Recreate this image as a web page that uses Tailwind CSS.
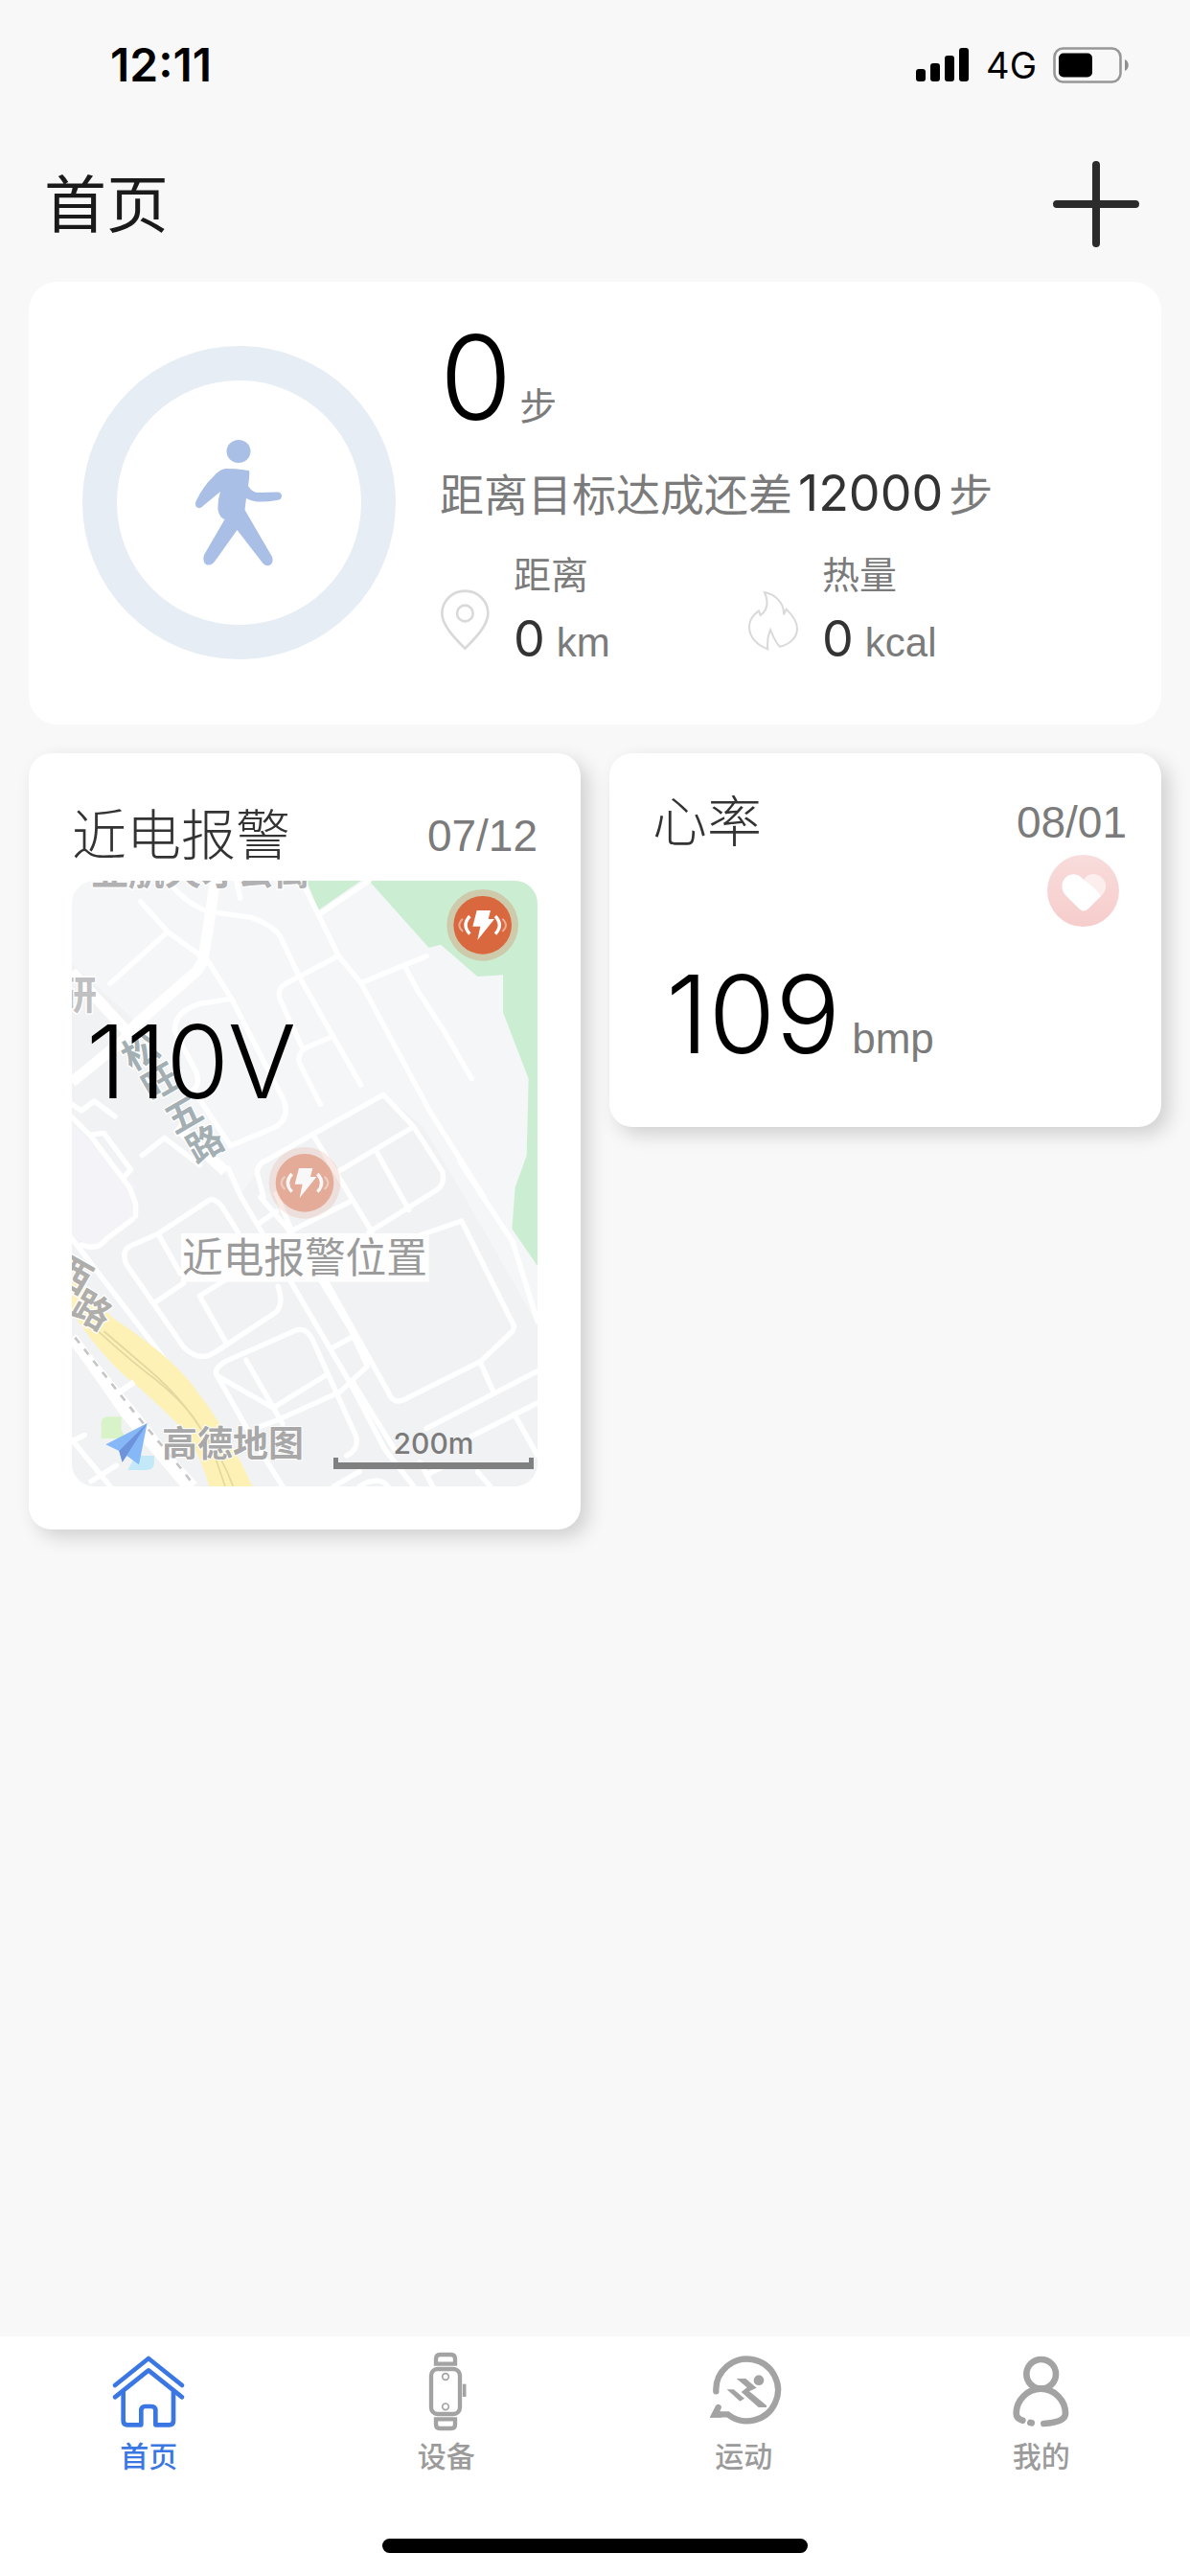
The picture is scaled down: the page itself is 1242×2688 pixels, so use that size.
<!DOCTYPE html>
<html lang="zh-CN">
<head>
  <meta charset="UTF-8">
  <meta name="viewport" content="width=device-width, initial-scale=1.0">
  <title>首页</title>
  <script src="https://cdn.jsdelivr.net/npm/@tailwindcss/browser@4"></script>
</head>
<body class="min-h-screen flex flex-col bg-[#f8f8f8] text-black font-[Inter,'Noto_Sans_CJK_SC',sans-serif]">

  <!-- Status bar -->
  <div class="h-[136px] pl-[115px] pr-[63px] flex items-center justify-between">
    <span class="text-[48px] leading-none font-semibold">12:11</span>
    <div class="flex items-center gap-[17px]">
      <svg class="w-[56px] h-[36px]" viewBox="0 0 56 36">
        <rect x="0" y="22" width="10" height="13" rx="3"/>
        <rect x="15" y="16" width="10" height="19" rx="3"/>
        <rect x="30" y="8" width="10" height="27" rx="3"/>
        <rect x="45" y="0" width="10" height="35" rx="3"/>
      </svg>
      <span class="text-[38px] leading-none">4G</span>
      <svg class="w-[80px] h-[38px]" viewBox="0 0 80 38">
        <rect x="1.5" y="1.5" width="69" height="35" rx="9" fill="none" stroke="#979797" stroke-width="2.6"/>
        <rect x="6" y="6.500" width="35" height="25" rx="5"/>
        <path d="M75 13c5 2 5 10 0 12z" fill="#8f8f8f"/>
      </svg>
    </div>
  </div>

  <!-- Header -->
  <header class="h-[154px] mb-1 pl-[46px] pr-[53px] flex items-center justify-between">
    <h1 class="text-[65px] leading-none font-normal text-[#1a1a1a]">首页</h1>
    <button type="button" aria-label="添加" class="w-[90px] h-[90px]">
      <svg class="w-full h-full" viewBox="0 0 90 90" stroke="#2b2b2b" stroke-width="8" stroke-linecap="round">
        <path d="M45 4v82M4 45h82"/>
      </svg>
    </button>
  </header>

  <main class="grow px-[30px]">

    <!-- Steps -->
    <section class="bg-white rounded-[30px] pl-14 pt-[39px] pb-[59px] flex items-start gap-[46px]">
      <svg class="w-[327px] h-[327px] mt-7 shrink-0" viewBox="86 361 327 327">
        <circle cx="249.500" cy="524.500" r="145.500" fill="none" stroke="#e7edf4" stroke-width="36"/>
        <g fill="#a9bfe6">
          <ellipse cx="249" cy="471" rx="12.500" ry="12"/>
          <path d="M236 489Q248 489 260 491Q261 494 259 507Q263 514 270 514L289 513.500Q294 513.500 294 517.500Q294 521.500 289 522Q278 524 268 523.500Q262 523 257 520L255.500 532L284 581Q286 588 281 590Q276 591 273 586L247.500 553L224 586Q220 591 215 589Q211 586 213 579L234.500 542Q229 540 227.500 532Q227 522 230 513L213 527Q209 532 205 529Q203 526 205 522Q213 506 223 497Q230 489 236 489Z"/>
        </g>
      </svg>
      <div class="grow">
        <p class="flex items-baseline gap-2">
          <span class="text-[122px] leading-[122px] font-light">0</span>
          <span class="text-[39px] leading-none text-[#7b7b7b]">步</span>
        </p>
        <p class="mt-7 h-[62px] flex items-baseline gap-[6px] text-[46px] leading-[64px] text-[#7b7b7b]">
          <span>距离目标达成还差</span>
          <span class="text-[52px] text-[#333]">12000</span>
          <span>步</span>
        </p>
        <div class="mt-8 grid grid-cols-[322px_322px]">
          <div class="flex items-end gap-6">
            <svg class="w-[53px] h-[65px] mb-[17px]" viewBox="54 166 159 195" fill="none" stroke="#d9d9d9" stroke-width="8">
              <path d="M133 351C100 318 61 278 61 241A72 70 0 0 1 205 241C205 278 166 318 133 351Z"/>
              <circle cx="133" cy="241" r="25"/>
            </svg>
            <div>
              <p class="text-[39px] leading-[46px] text-[#7b7b7b]">距离</p>
              <p class="mt-[14px] h-[60px] flex items-baseline gap-3 leading-[60px]">
                <span class="text-[52px] text-[#333]">0</span>
                <span class="text-[42px] text-[#7b7b7b] font-['Liberation_Sans',sans-serif]">km</span>
              </p>
            </div>
          </div>
          <div class="flex items-end gap-6">
            <svg class="w-[53px] h-[65px] mb-[17px]" viewBox="1024 166 159 195" fill="none" stroke="#d9d9d9" stroke-width="6">
              <path d="M1075 175C1110 182 1137 210 1135 245L1143 228C1165 250 1178 270 1177 290C1176 320 1150 340 1122 345Q1108 330 1093 292C1084 315 1082 330 1085 353C1050 340 1028 315 1027 285C1026 262 1040 245 1057 233L1062 247C1085 230 1088 205 1075 175Z"/>
            </svg>
            <div>
              <p class="text-[39px] leading-[46px] text-[#7b7b7b]">热量</p>
              <p class="mt-[14px] h-[60px] flex items-baseline gap-3 leading-[60px]">
                <span class="text-[52px] text-[#333]">0</span>
                <span class="text-[42px] text-[#7b7b7b] font-['Liberation_Sans',sans-serif]">kcal</span>
              </p>
            </div>
          </div>
        </div>
      </div>
    </section>

    <div class="mt-[30px] grid grid-cols-2 gap-[30px] items-start">

      <!-- Electric alarm -->
      <section class="bg-white rounded-[24px] px-[45px] pt-14 pb-[45px] shadow-[8px_8px_20px_rgba(0,0,0,0.16)]">
        <div class="flex items-center justify-between">
          <h2 class="text-[57px] leading-[60px] font-light text-[#333]">近电报警</h2>
          <time class="text-[46px] leading-[60px] text-[#7b7b7b] font-['Liberation_Sans',sans-serif]">07/12</time>
        </div>
        <div class="relative mt-[17px] rounded-[24px] overflow-hidden">
          <svg class="block w-full" viewBox="0 0 1458 1896" font-family="'Noto Sans CJK SC',sans-serif">
            <defs>
              <g id="alarm">
                <circle r="112" fill="#d8643c" opacity=".26"/>
                <circle r="91" fill="#d9683f"/>
                <path d="M-18 -46H25L18 -19H37L-16 47L-7 4H-31Z" fill="#fff"/>
                <path d="M-40 -28Q-66 0 -40 28M40 -28Q66 0 40 28" fill="none" stroke="#fff" stroke-width="10"/>
                <path d="M-62 -20Q-84 0 -62 20M62 -20Q84 0 62 20" fill="none" stroke="#fff" stroke-width="6" opacity=".45"/>
              </g>
            </defs>
            <rect width="1458" height="1896" fill="#f5f6f8"/>
            <path d="M0 260L200 440L340 650L520 990L600 890L975 670L1100 770L1230 990L1458 1390V1896H0Z" fill="#f1f2f4"/>
            <path d="M0 760L200 950L190 1060L60 1150L0 1110Z" fill="#f4f4f8"/>

            <!-- parks -->
            <path d="M735 0H905L772 92Z" fill="#cbeed3"/>
            <path d="M930 0H1458V1206L1378 1090L1388 960L1424 860L1430 620L1350 412V295L1270 300L1155 200L1118 210Z" fill="#cbeed3"/>

            <!-- streets -->
            <g fill="none" stroke="#fff" stroke-width="16" stroke-linejoin="round" stroke-linecap="round">
              <path d="M300 0Q350 65 420 95L560 115Q640 145 655 180L712 300L905 640M215 65L300 160L425 250L500 370L660 680Q690 745 630 775L495 830M300 160L120 322M515 0L527 55"/>
              <path d="M720 0L835 235L905 320L1120 720L1290 990M930 0L775 105M835 235L712 300L670 322Q640 340 652 372L720 520M905 320L1110 236M1045 272L1080 340L1165 470L1252 620M810 490L740 520Q705 535 712 570L778 700"/>
              <path d="M495 370L400 385Q320 410 322 470L390 600Q402 640 380 655L490 820M0 740L60 800L180 960L200 1010V1050M0 700L30 720L70 690L135 738M60 795L100 790L185 905L160 930M220 860L290 805L400 890"/>
              <path d="M600 990L580 915Q580 885 610 875L975 670L1070 770L1160 910Q1170 950 1140 970L930 1100M755 795L940 1100M835 910L1070 770M955 850L1055 1030M870 1005L680 1100M640 1035L590 1070"/>
              <path d="M490 900L530 990L700 1280L870 1570L980 1780L1070 1896M590 990L690 1105L870 1400L925 1520M640 980L690 1100M800 1260L990 1600Q1005 1640 1040 1625L1280 1505L1380 1410L1385 1395L1220 1065L1090 1110"/>
              <path d="M270 1105L180 1145Q155 1160 170 1200L350 1460Q400 1510 450 1475L640 1350Q665 1320 645 1270M270 1105L430 1000Q445 990 470 1020L520 1100M270 1105L340 1230M260 1320L350 1260M400 1300L480 1250M400 1300L485 1450"/>
              <path d="M630 1650L455 1550Q440 1530 480 1505L700 1408Q735 1395 755 1440L800 1540L890 1740Q900 1780 860 1800M455 1550L580 1770L660 1896M545 1500L660 1700M630 1650L800 1545M585 1710L640 1690L840 1600L925 1520M820 1460L875 1430"/>
              <path d="M1110 1715L1458 1535M1250 1740L1458 1635M1280 1510L1320 1600M1385 1670L1458 1800M880 1570L1010 1780M1110 1860L1170 1830M820 1896L900 1850M1090 1820L1130 1896M1270 1850L1310 1896M900 1896Q960 1860 990 1896"/>
              <path d="M1215 880L1380 1130L1458 1380M0 1120L300 1510M0 1440L160 1670L350 1896M0 1750L120 1896M0 1755L40 1735M60 1880L140 1830M30 1140Q80 1160 110 1120L190 1060"/>
            </g>
            <g fill="none" stroke="#fff" stroke-width="34" stroke-linejoin="round">
              <path d="M448 0L430 130L410 250Q400 280 360 310L200 450L160 500L0 630M0 285L180 480M330 770L480 910"/>
            </g>

            <!-- highway -->
            <path d="M0 1240L130 1370Q330 1500 400 1610Q480 1710 565 1896H430Q400 1780 330 1700Q240 1610 190 1570Q100 1500 0 1350Z" fill="#fdf1b5"/>
            <path d="M60 1390Q180 1500 260 1560Q360 1640 400 1710Q470 1800 505 1896M100 1410L240 1530Q370 1640 440 1780L480 1896" fill="none" stroke="#e3d8a0" stroke-width="5"/>
            <path d="M0 1430L60 1510L200 1680L300 1810L380 1896" fill="none" stroke="#fff" stroke-width="34"/>
            <path d="M10 1430L200 1670L350 1850L385 1896" fill="none" stroke="#c6c6c8" stroke-width="8" stroke-dasharray="22 24"/>
            <path d="M150 1600L195 1570" stroke="#fff" stroke-width="18"/>

            <!-- place names -->
            <g font-weight="700" stroke="#fff" stroke-width="8" paint-order="stroke">
              <text x="62" y="12" font-size="114" fill="#b1b1b3">亚航天才公寓</text>
              <text x="-46" y="402" font-size="124" fill="#c0c0c2">研</text>
              <g font-size="112" fill="#a3afb3" text-anchor="middle">
                <text transform="translate(215 535) rotate(-30)" y="40">松</text>
                <text transform="translate(277 630) rotate(-30)" y="40">旺</text>
                <text transform="translate(350 732) rotate(-30)" y="40">五</text>
                <text transform="translate(417 824) rotate(-30)" y="40">路</text>
              </g>
              <g font-size="118" fill="#afaeaa" text-anchor="middle">
                <text transform="translate(2 1232) rotate(30)" y="42">西</text>
                <text transform="translate(62 1345) rotate(30)" y="42">路</text>
              </g>
            </g>

            <use href="#alarm" x="1286" y="139"/>
            <use href="#alarm" x="729" y="946" opacity=".5"/>
            <rect x="342" y="1104" width="776" height="152" fill="#fff" opacity=".9"/>
            <text x="345" y="1228" font-size="128" fill="#9b9b9b">近电报警位置</text>

            <!-- map provider -->
            <path d="M92 1700Q92 1678 114 1678H155V1720L170 1746H92Z" fill="#d9f3c8"/>
            <path d="M175 1845L200 1800H258V1820Q258 1845 232 1845Z" fill="#c3e9f8"/>
            <path d="M236 1698L106 1765L148 1785L158 1820L172 1800L210 1828Z" fill="#86b7f6"/>
            <path d="M236 1698L148 1785L158 1820Z" fill="#6c93dc"/>
            <text x="282" y="1804" font-size="111" font-weight="700" fill="#a8a8a8" stroke="#fff" stroke-width="6" paint-order="stroke">高德地图</text>
          </svg>
          <p class="absolute left-[15px] top-[136px] text-[106px] leading-[106px] font-light">110V</p>
          <div class="absolute right-1 bottom-[18px] w-[209px] text-center text-[30px] leading-[30px] font-medium text-[#7b7b7b]">
            200m
            <div class="h-3 border-x-[5px] border-b-[7px] border-[#808080]"></div>
          </div>
        </div>
      </section>

      <!-- Heart rate -->
      <section class="bg-white rounded-[24px] pl-[45px] pr-9 pt-[42px] pb-[61px] shadow-[8px_8px_20px_rgba(0,0,0,0.16)]">
        <div class="flex items-center justify-between">
          <h2 class="text-[57px] leading-[60px] font-light text-[#333]">心率</h2>
          <time class="text-[46px] leading-[60px] text-[#7b7b7b] font-['Liberation_Sans',sans-serif]">08/01</time>
        </div>
        <svg class="block w-[75px] h-[75px] mt-1 ml-auto mr-2" viewBox="0 0 75 75">
          <defs>
            <linearGradient id="pink" x1="0" y1="0" x2="0" y2="1">
              <stop offset="0" stop-color="#f8dcdc"/>
              <stop offset="1" stop-color="#f6cdcb"/>
            </linearGradient>
          </defs>
          <circle cx="37.500" cy="37.500" r="37.500" fill="url(#pink)"/>
          <path d="M38 26C41 20 49 18 55 22C62 27 63 35 58 41L43 56Z" fill="#fbeeed"/>
          <path d="M38 26C34 20 26 18 20 23C14 28 14 36 19 42L33 56Q38 61 43 56L56 43Q50 34 38 26Z" fill="#fff"/>
        </svg>
        <p class="mt-[35px] pl-[14px] flex items-baseline gap-3">
          <span class="text-[113px] leading-[113px] font-light">109</span>
          <span class="text-[44px] leading-none text-[#7b7b7b] font-['Liberation_Sans',sans-serif]">bmp</span>
        </p>
      </section>
    </div>
  </main>

  <!-- Tab bar -->
  <nav class="h-[250px] bg-white pt-4 pb-6 flex flex-col justify-between items-center">
    <div class="w-full grid grid-cols-4 text-[30px] leading-[40px] font-medium text-[#9b9b9b]">
      <a href="#" class="flex flex-col items-center gap-[5px] text-[#3b77e3]">
        <svg class="w-[84px] h-[84px]" viewBox="101 72 252 252" fill="none" stroke="currentColor" stroke-width="14" stroke-linecap="round" stroke-linejoin="round">
          <path d="M122 177L227 93L332 177M122 214L227 130L332 214"/>
          <path stroke-linecap="butt" d="M148 196V288Q148 301 161 301H204V256Q204 243 217 243H236Q249 243 249 256V301H292Q305 301 305 288V196"/>
        </svg>
        首页
      </a>
      <a href="#" class="flex flex-col items-center gap-[5px]">
        <svg class="w-[84px] h-[84px]" viewBox="1029 72 252 252" fill="none" stroke="#a3a3a3" stroke-width="13">
          <path d="M1122 110V94Q1122 81 1135 81H1169Q1182 81 1182 94V110ZM1122 283V299Q1122 312 1135 312H1169Q1182 312 1182 299V283Z"/>
          <rect x="1107" y="126" width="90" height="141" rx="20"/>
          <circle cx="1152" cy="150" r="10" stroke-width="5"/>
          <circle cx="1152" cy="244" r="10" stroke-width="5"/>
          <path d="M1211 173V213" stroke-width="11"/>
        </svg>
        设备
      </a>
      <a href="#" class="flex flex-col items-center gap-[5px]">
        <svg class="w-[84px] h-[84px]" viewBox="103 72 252 252">
          <path d="M143 196A97 97 0 1 1 180 268H139L150 246" fill="none" stroke="#a3a3a3" stroke-width="19" stroke-linecap="round"/>
          <path d="M123 278L142 246L160 262V278Z" fill="#a3a3a3"/>
          <g fill="#a3a3a3">
            <circle cx="277" cy="161" r="16"/>
            <path d="M207 156H236L270 185L247 196L301 240V246H276L222 198L240 184Z"/>
            <path d="M177 190H198L232 218L218 227Z"/>
          </g>
        </svg>
        运动
      </a>
      <a href="#" class="flex flex-col items-center gap-[5px]">
        <svg class="w-[84px] h-[84px]" viewBox="1034 72 252 252" fill="none" stroke="#a3a3a3" stroke-width="20" stroke-linecap="round">
          <circle cx="1159" cy="142" r="46"/>
          <path d="M1101 287Q1081 282 1081 265C1081 225 1115 188 1158 188C1201 188 1235 225 1235 265Q1235 293 1167 297"/>
          <path d="M1125 294L1129 295"/>
        </svg>
        我的
      </a>
    </div>
    <div class="w-[444px] h-[15px] rounded-full bg-black"></div>
  </nav>
</body>
</html>
